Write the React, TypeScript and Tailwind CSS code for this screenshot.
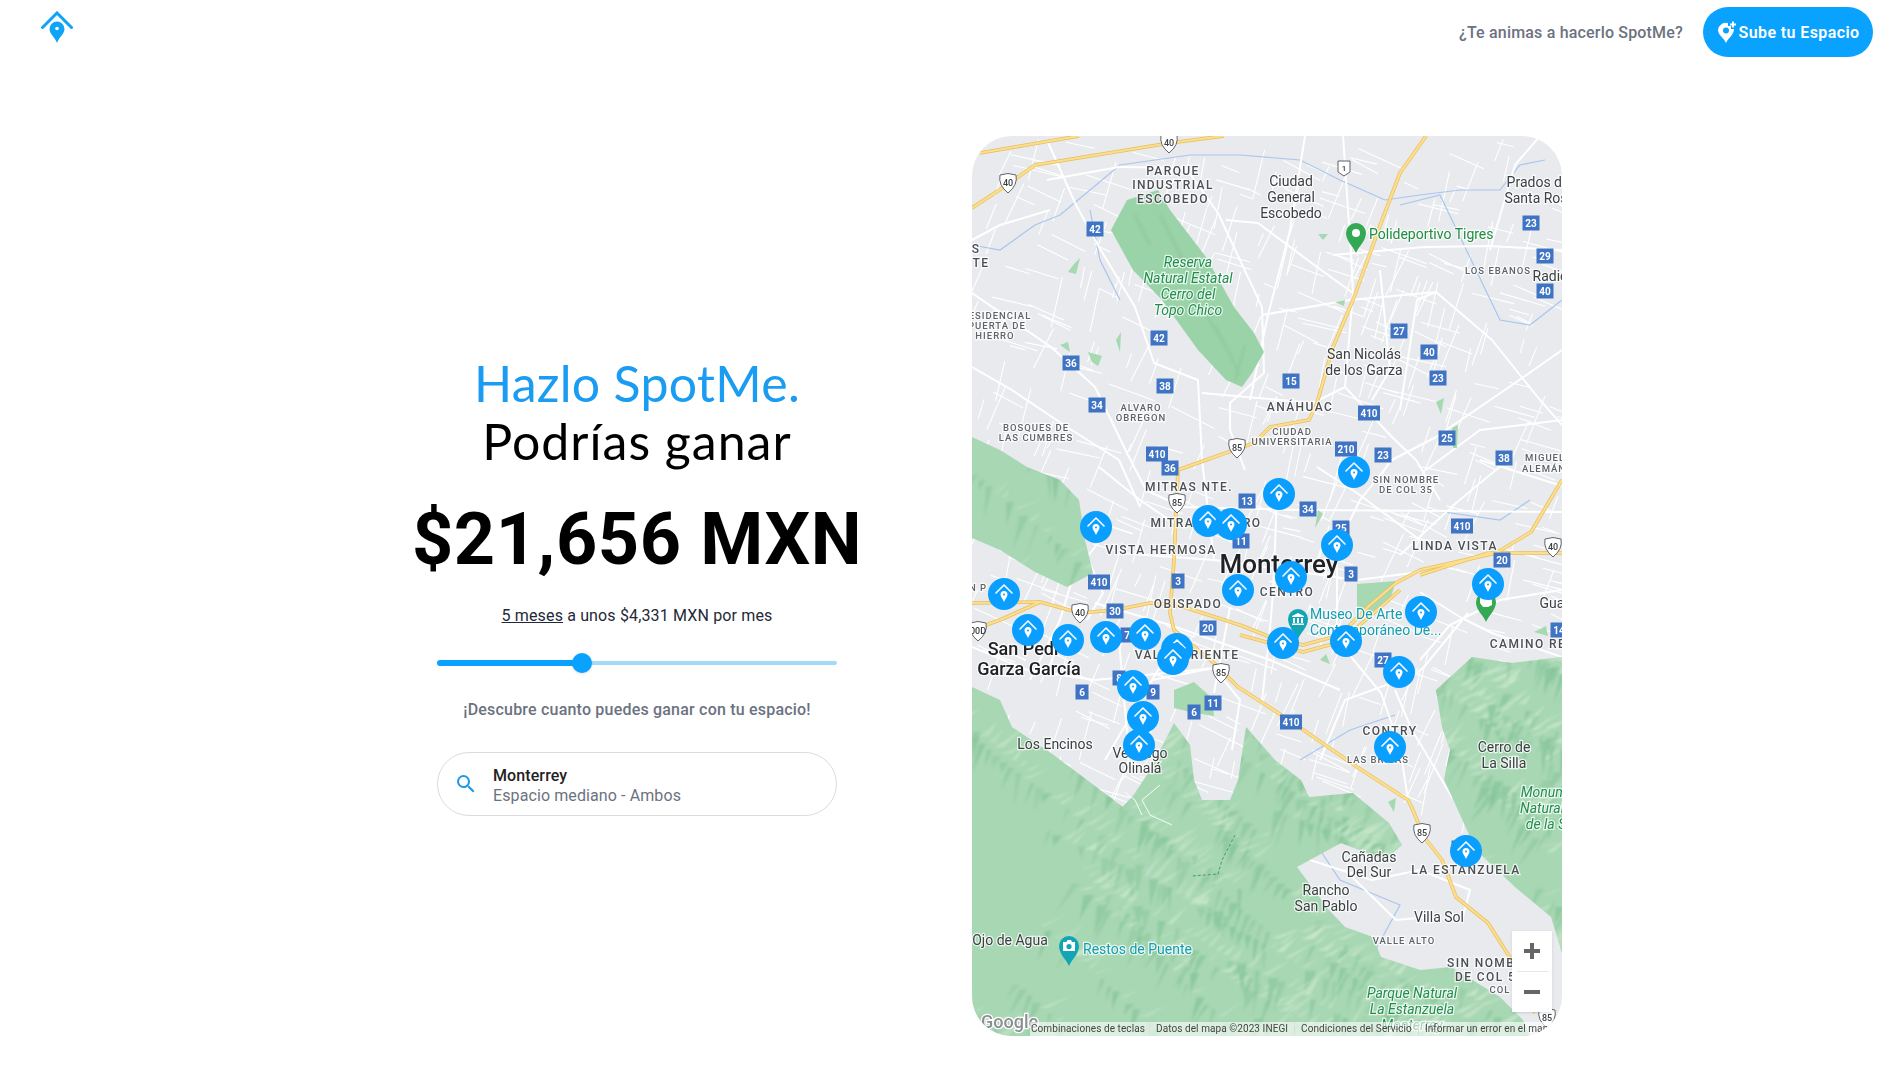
import { useMemo } from "react";

type Label = [string, number, number];

const sierraPaths = [
  "M972,437 L1000,450 L1027,467 L1060,480 L1079,500 L1085,540 L1093,573 L1067,587 L1035,572 L1000,550 L972,538 Z",
  "M972,687 L1000,700 L1012,727 L1051,753 L1087,780 L1123,807 L1135,793 L1150,770 L1174,723 L1190,745 L1194,780 L1202,800 L1230,800 L1238,780 L1246,727 L1275,760 L1301,780 L1309,797 L1353,793 L1389,823 L1402,845 L1385,860 L1341,843 L1297,867 L1329,910 L1345,927 L1373,937 L1381,957 L1420,970 L1451,967 L1500,997 L1523,1020 L1530,1036 L972,1036 Z",
  "M1562,657 L1512,663 L1472,657 L1436,690 L1442,727 L1450,750 L1444,780 L1452,797 L1476,850 L1515,887 L1551,917 L1562,953 Z",
];

const parks = [
  "M1111,230 L1127,200 L1158,190 L1170,210 L1206,257 L1234,307 L1254,333 L1264,352 L1252,373 L1242,387 L1226,380 L1198,350 L1162,300 L1133,270 Z",
  "M1357,584 L1396,581 L1390,600 L1372,612 L1357,607 Z",
  "M1174,690 L1194,682 L1212,698 L1214,716 L1190,712 L1174,708 Z",
  "M1088,352 L1102,356 L1098,366 L1092,362 Z",
  "M1116,340 L1120,352 L1121,332 Z",
  "M1452,428 L1458,425 L1457,448 L1453,448 Z",
  "M1436,402 L1444,398 L1441,414 Z",
  "M1315,528 L1318,510 L1323,514 Z",
  "M1060,345 L1068,342 L1070,352 Z",
  "M1068,272 L1074,264 L1080,258 L1076,274 Z",
  "M1335,302 L1345,300 L1344,306 Z",
  "M1318,234 L1328,234 L1323,240 Z",
  "M1388,802 L1396,798 L1394,812 Z",
  "M1534,632 L1546,626 L1548,636 Z",
  "M1320,660 L1326,654 L1330,664 Z",
];

const majorRoads = [
  "1119,167 1186,168 1218,213 1262,307 1264,373 1230,403 1230,430 1245,470",
  "1226,220 1258,223 1317,267 1353,293",
  "1262,315 1350,300 1436,292 1492,340 1540,400 1562,425",
  "1343,136 1351,253 1353,293 1345,387 1392,437 1416,460 1440,500",
  "1333,255 1424,247 1488,246 1562,250",
  "1562,350 1515,383 1436,437 1392,460 1360,500 1337,547",
  "1047,140 1075,203 1099,247 1135,307 1154,363 1198,380 1202,460 1214,560",
  "972,293 1051,347 1095,387 1127,453 1146,490 1182,507",
  "972,367 1012,390 1067,427 1119,460 1140,507",
  "1047,180 1119,167",
  "1202,393 1313,403 1345,387",
  "1182,507 1300,510 1450,511 1562,512",
  "1111,527 1087,557 1103,593 1087,620",
  "1119,553 1214,560 1357,580 1420,572",
  "1099,467 1140,500 1174,523",
  "1230,607 1214,693",
  "1277,497 1273,593 1269,640 1262,700",
  "1337,547 1337,640 1381,693 1400,747 1408,800",
  "1468,613 1424,667 1400,687",
  "1562,657 1492,633 1460,617 1420,592",
  "1317,467 1357,493 1420,540",
  "1508,460 1456,503 1400,555",
  "972,647 1027,670 1095,680 1166,673 1214,668",
  "1119,640 1127,733 1135,760",
  "1095,603 1170,625 1270,660 1340,690",
  "1400,410 1417,300 1436,292",
  "1562,590 1500,600 1450,625 1420,660",
  "1490,250 1515,165 1540,136",
  "1250,400 1268,315 1290,230 1305,136",
  "1372,400 1390,370 1380,270",
  "1426,470 1480,430 1562,420",
  "1050,210 1000,225 972,240",
  "1152,680 1214,668 1240,700 1232,750",
  "1320,760 1345,700 1400,680",
  "1452,797 1412,730 1395,690",
  "1310,860 1372,880 1420,870 1470,890 1462,920",
  "1345,870 1396,920 1440,916",
  "1090,520 1060,620 1030,680",
  "1105,760 1140,700 1170,650",
  "1480,460 1562,486",
];

const highways = [
  "972,208 1004,187 1035,165 1170,143 1224,136",
  "980,153 1079,136",
  "1426,136 1400,173 1381,223 1353,300 1333,347 1317,403 1309,420 1270,427 1254,443 1206,460 1178,470 1174,560 1170,613 1174,630 1214,663",
  "972,630 1000,620 1040,602 1080,613 1115,610 1150,603 1180,606 1240,625 1270,637 1303,645 1340,635 1370,605 1396,583 1420,570 1496,553 1531,532 1562,480",
  "972,603 1040,602",
  "1240,635 1303,652 1340,642 1375,612 1400,590",
  "1214,663 1238,687 1289,720 1357,767 1408,800 1412,808 1424,837 1442,860 1456,897 1488,923 1516,967 1535,1013",
  "1420,575 1488,553 1562,553",
];

const water = [
  "972,245 1000,250 1035,225 1060,215 1090,190 1120,165 1190,155 1240,155 1300,160 1340,180 1385,200 1420,195 1460,190 1500,190 1520,165 1545,160",
  "1090,210 1100,260 1120,300",
  "1400,205 1440,195 1500,320 1530,325 1562,300",
  "1072,1000 1030,985 972,915",
  "1072,960 1075,975 1040,985 1030,1000 1050,1030",
  "1430,510 1500,520 1530,500",
  "1300,760 1350,730 1395,715",
  "1320,850 1340,880 1400,905 1370,960",
];

const regionLabels: Label[] = [
  ["PARQUE", 1173, 175], ["INDUSTRIAL", 1173, 189], ["ESCOBEDO", 1173, 203],
  ["MITRAS NTE.", 1189, 491], ["MITRAS CENTRO", 1206, 527], ["VISTA HERMOSA", 1161, 554],
  ["LINDA VISTA", 1455, 550], ["CENTRO", 1287, 596], ["OBISPADO", 1188, 608],
  ["VALLE ORIENTE", 1187, 659], ["CONTRY", 1390, 735], ["LA ESTANZUELA", 1466, 874],
  ["ANÁHUAC", 1300, 411], ["CAMINO RE", 1528, 648], ["S", 976, 253], ["TE", 981, 267],
];

const smallRegionLabels: Label[] = [
  ["ESIDENCIAL", 1000, 319], ["PUERTA DE", 997, 329], ["HIERRO", 995, 339],
  ["LOS EBANOS", 1498, 274], ["ALVARO", 1141, 411], ["OBREGON", 1141, 421],
  ["BOSQUES DE", 1036, 431], ["LAS CUMBRES", 1036, 441], ["CIUDAD", 1292, 435],
  ["UNIVERSITARIA", 1292, 445], ["MIGUEL", 1545, 461], ["ALEMÁN", 1544, 472],
  ["SIN NOMBRE", 1406, 483], ["DE COL 35", 1406, 493], ["LAS BRISAS", 1378, 763],
  ["VALLE ALTO", 1404, 944], ["COL", 1500, 993], ["N P", 978, 591],
];

const placeLabels: Label[] = [
  ["Ciudad", 1291, 186], ["General", 1291, 202], ["Escobedo", 1291, 218],
  ["Prados de", 1538, 187], ["Santa Ros", 1536, 203], ["Radic", 1550, 281],
  ["San Nicolás", 1364, 359], ["de los Garza", 1364, 375], ["Gua", 1552, 608],
  ["Los Encinos", 1055, 749], ["Verdiego", 1140, 758], ["Olinalá", 1140, 773],
  ["Cerro de", 1504, 752], ["La Silla", 1504, 768], ["Cañadas", 1369, 862],
  ["Del Sur", 1369, 877], ["Rancho", 1326, 895], ["San Pablo", 1326, 911],
  ["Villa Sol", 1439, 922], ["Ojo de Agua", 1010, 945],
];

const parkLabels: Label[] = [
  ["Reserva", 1188, 267], ["Natural Estatal", 1188, 283], ["Cerro del", 1188, 299], ["Topo Chico", 1188, 315],
  ["Monum", 1544, 797], ["Natural", 1542, 813], ["de la S", 1546, 829],
  ["Parque Natural", 1412, 998], ["La Estanzuela", 1412, 1014], ["Monterrey", 1412, 1030],
];

const badges: Label[] = [
  ["42", 1095, 229], ["42", 1159, 338], ["36", 1071, 363], ["38", 1165, 386], ["34", 1097, 405],
  ["410", 1157, 454], ["15", 1291, 381], ["410", 1369, 413], ["210", 1346, 449], ["23", 1383, 455],
  ["25", 1447, 438], ["23", 1438, 378], ["40", 1429, 352], ["27", 1399, 331], ["40", 1545, 291],
  ["29", 1545, 256], ["23", 1531, 223], ["38", 1504, 458], ["36", 1170, 468], ["13", 1247, 501],
  ["34", 1308, 509], ["410", 1462, 526], ["25", 1341, 528], ["11", 1241, 541], ["20", 1502, 560],
  ["3", 1351, 574], ["3", 1178, 581], ["410", 1099, 582], ["30", 1115, 611], ["20", 1208, 628],
  ["14", 1559, 630], ["7", 1127, 635], ["27", 1383, 660], ["8", 1119, 678], ["9", 1153, 692],
  ["6", 1082, 692], ["11", 1213, 703], ["6", 1194, 712], ["410", 1291, 722], ["", 1458, 848],
];

const shields: Label[] = [
  ["40", 1169, 143], ["40", 1008, 183], ["85", 1237, 448], ["85", 1177, 503], ["40", 1080, 613],
  ["40", 1553, 547], ["00D", 978, 631], ["85", 1221, 673], ["85", 1422, 833], ["85", 1547, 1018],
];

const markers: [number, number][] = [
  [1354, 472], [1279, 494], [1208, 521], [1231, 524], [1096, 527], [1337, 545], [1291, 577],
  [1238, 590], [1004, 594], [1488, 584], [1421, 612], [1028, 630], [1068, 640], [1106, 637], [1145, 634],
  [1177, 649], [1173, 659], [1283, 643], [1346, 641], [1399, 672], [1133, 686], [1143, 717],
  [1139, 745], [1390, 747], [1466, 851],
];

// small seeded generator so the map comes out the same on every render
function seeded(seed: number) {
  let s = seed;
  return () => {
    s = (s + 0x6d2b79f5) | 0;
    let t = Math.imul(s ^ (s >>> 15), 1 | s);
    t = (t + Math.imul(t ^ (t >>> 7), 61 | t)) ^ t;
    return ((t ^ (t >>> 14)) >>> 0) / 4294967296;
  };
}

function Pin({ x, y, color, icon }: { x: number; y: number; color: string; icon?: "museum" | "camera" | "park" }) {
  return (
    <g transform={`translate(${x} ${y})`}>
      <path d="M0,16 C-3,9 -10,4 -10,-4 A10,10 0 1 1 10,-4 C10,4 3,9 0,16 Z" fill={color} />
      {!icon && <circle cx="0" cy="-4" r="4" fill="#fff" />}
      {icon === "museum" && <path d="M0,-10 L6,-7 V-6 H-6 V-7 Z M-5,-5 H-3 V0 H-5 Z M-1,-5 H1 V0 H-1 Z M3,-5 H5 V0 H3 Z M-6,0.5 H6 V2 H-6 Z" fill="#fff" />}
      {icon === "camera" && (
        <g>
          <path d="M-6,-8 H-2.5 L-1.5,-10 H2 L3,-8 H6 V1 H-6 Z" fill="#fff" />
          <circle cy="-3.5" r="2.6" fill={color} />
        </g>
      )}
      {icon === "park" && <path d="M-6,-9 H3 L6,-6 V-1 L2,1 H-3 L-6,-3 Z" fill="#fff" />}
    </g>
  );
}

function MapLayer() {
  const { streets, feathers } = useMemo(() => {
    const rand = seeded(17);
    const streets: string[] = [];
    for (let i = 0; i < 620; i++) {
      const x = 972 + rand() * 590;
      const y = 136 + rand() * 660;
      const a = (rand() > 0.5 ? 0.2 : 1.75) + rand() * 0.3;
      const len = 12 + rand() * 42;
      streets.push(`M${x.toFixed(1)},${y.toFixed(1)} L${(x + Math.cos(a) * len).toFixed(1)},${(y + Math.sin(a) * len).toFixed(1)}`);
    }
    // ridge lines, each with small light and dark slopes branching off it
    const feathers: { d: string; fill: string; o: number }[] = [];
    for (let r = 0; r < 90; r++) {
      let x = 930 + rand() * 620;
      let y = 430 + rand() * 600;
      const heading = 0.45 + rand() * 0.35;
      const steps = 12 + Math.floor(rand() * 22);
      for (let i = 0; i < steps; i++) {
        x += Math.cos(heading) * 9;
        y += Math.sin(heading) * 9 + (rand() - 0.5) * 3;
        const up = rand() > 0.5;
        const a = heading + (up ? -1.25 : 1.25) + (rand() - 0.5) * 0.5;
        const len = 10 + rand() * 26;
        const w = 1.5 + rand() * 4;
        const ex = x + Math.cos(a) * len;
        const ey = y + Math.sin(a) * len;
        feathers.push({
          d: `M${(x - w).toFixed(1)},${y.toFixed(1)} L${(x + w).toFixed(1)},${y.toFixed(1)} L${ex.toFixed(1)},${ey.toFixed(1)} Z`,
          fill: up ? "#cdeacf" : "#86c598",
          o: 0.35 + rand() * 0.4,
        });
      }
    }
    return { streets, feathers };
  }, []);

  return (
    <svg viewBox="972 136 590 900" className="block w-full h-full">
      <defs>
        <clipPath id="sierra">
          {sierraPaths.map((d) => (
            <path key={d} d={d} />
          ))}
        </clipPath>
        <filter id="soft">
          <feGaussianBlur stdDeviation="0.8" />
        </filter>
      </defs>

      <rect x="972" y="136" width="590" height="900" fill="#e8eaed" />
      <g stroke="#fff" strokeWidth="1.1" fill="none">
        {streets.map((d) => (
          <path key={d} d={d} />
        ))}
      </g>
      <g stroke="#a9c6ee" strokeWidth="1.2" fill="none">
        {water.map((p) => (
          <polyline key={p} points={p} />
        ))}
      </g>
      <g stroke="#fff" strokeWidth="2" fill="none" strokeLinejoin="round">
        {majorRoads.map((p) => (
          <polyline key={p} points={p} />
        ))}
      </g>

      {sierraPaths.map((d) => (
        <path key={d} d={d} fill="#a8d7b4" />
      ))}
      <g clipPath="url(#sierra)">
        <g filter="url(#soft)">
          {feathers.map((s) => (
            <path key={s.d} d={s.d} fill={s.fill} opacity={s.o} />
          ))}
        </g>
      </g>
      {parks.map((d, i) => (
        <path key={d} d={d} fill={i === 0 ? "#9bd3a9" : "#a6d8b2"} />
      ))}
      <g stroke="#8cc49a" strokeWidth="3" opacity="0.5" filter="url(#soft)">
        <path d="M1135,215 L1150,245 M1160,215 L1185,265 M1190,290 L1225,345 M1215,325 L1240,375 M1245,345 L1235,380" />
      </g>

      <g fill="none" stroke="#fff" strokeWidth="1" opacity="0.9">
        <path d="M1142,815 L1135,800 L1125,792 M1160,785 L1142,800 L1150,815 L1172,825" />
      </g>
      <path d="M1235,835 L1222,860 L1218,874 L1192,876" fill="none" stroke="#3f9f60" strokeWidth="1" strokeDasharray="3 2" />

      <g fill="none" strokeLinejoin="round">
        <g stroke="#e8bd5c" strokeWidth="3.6">
          {highways.map((p) => (
            <polyline key={p} points={p} />
          ))}
        </g>
        <g stroke="#fbdf8e" strokeWidth="2.2">
          {highways.map((p) => (
            <polyline key={p} points={p} />
          ))}
        </g>
      </g>

      <g fontFamily="Roboto, sans-serif" textAnchor="middle" stroke="#ffffff" strokeWidth="2.5" paintOrder="stroke" strokeOpacity="0.75">
        <g fontSize="12" fontWeight="500" letterSpacing="1.4" fill="#4b4f54">
          {regionLabels.map(([t, x, y]) => (
            <text key={t + x} x={x} y={y}>{t}</text>
          ))}
        </g>
        <g fontSize="9.5" fontWeight="500" letterSpacing="1" fill="#5f6368">
          {smallRegionLabels.map(([t, x, y]) => (
            <text key={t + x} x={x} y={y}>{t}</text>
          ))}
        </g>
        <g fontSize="14" fill="#3c4043">
          {placeLabels.map(([t, x, y]) => (
            <text key={t + y} x={x} y={y}>{t}</text>
          ))}
        </g>
        <g fontSize="14" fontStyle="italic" fill="#1f8f4e">
          {parkLabels.map(([t, x, y]) => (
            <text key={t + y} x={x} y={y}>{t}</text>
          ))}
        </g>
        <text x="1279" y="573" fontSize="26" fontWeight="500" fill="#202124">Monterrey</text>
        <text x="1029" y="655" fontSize="18" fontWeight="500" fill="#202124">San Pedro</text>
        <text x="1029" y="675" fontSize="18" fontWeight="500" fill="#202124">Garza García</text>
        <g fontSize="14" textAnchor="start">
          <text x="1369" y="239" fill="#1e8e3e">Polideportivo Tigres</text>
          <text x="1310" y="619" fill="#129eaf">Museo De Arte</text>
          <text x="1310" y="635" fill="#129eaf">Contemporáneo De...</text>
          <text x="1083" y="954" fill="#129eaf">Restos de Puente</text>
          <text x="1447" y="967" fontSize="12" fontWeight="500" letterSpacing="1.4" fill="#4b4f54">SIN NOMB</text>
          <text x="1455" y="981" fontSize="12" fontWeight="500" letterSpacing="1.4" fill="#4b4f54">DE COL 5</text>
        </g>
      </g>

      <g fontFamily="Roboto, sans-serif" textAnchor="middle">
        {badges.map(([t, x, y]) => {
          const w = t.length > 2 ? 22 : t.length === 2 ? 17 : 13;
          return (
            <g key={`${t}-${x}`}>
              <rect x={x - w / 2} y={y - 7.5} width={w} height="15" fill="#3f74c4" />
              <text x={x} y={y + 3.5} fontSize="10" fontWeight="700" fill="#fff">{t}</text>
            </g>
          );
        })}
        {shields.map(([t, x, y]) => (
          <g key={`${t}-${x}`} transform={`translate(${x} ${y})`}>
            <path d="M-8,-8 Q0,-11 8,-8 Q10,2 0,10 Q-10,2 -8,-8 Z" fill="#fff" stroke="#5f6368" strokeWidth="1" />
            <text y="3" fontSize="9" fontWeight="500" fill="#3c4043">{t}</text>
          </g>
        ))}
        <g transform="translate(1344 168)">
          <path d="M-6,-7 H6 V4 L0,8 L-6,4 Z" fill="#fff" stroke="#5f6368" strokeWidth="1" />
          <text y="3" fontSize="8" fontWeight="500" fill="#3c4043">1</text>
        </g>
      </g>

      <Pin x={1356} y={237} color="#34a853" />
      <Pin x={1298} y={623} color="#12a5b5" icon="museum" />
      <Pin x={1069} y={950} color="#12a5b5" icon="camera" />
      <Pin x={1486} y={606} color="#34a853" icon="park" />

      {markers.map(([x, y]) => (
        <g key={`${x}-${y}`} transform={`translate(${x} ${y})`}>
          <circle r="16" fill="#0a9fff" />
          <path d="M-8,-1 L0,-9 L8,-1" fill="none" stroke="#fff" strokeWidth="1.6" strokeLinecap="round" strokeLinejoin="round" />
          <path d="M0,8 C-1,5 -3.5,3 -3.5,0.5 A3.5,3.5 0 1 1 3.5,0.5 C3.5,3 1,5 0,8 Z" fill="#fff" />
          <circle cy="0.5" r="1" fill="#0a9fff" />
        </g>
      ))}

      <text x="981" y="1028" fontFamily="Roboto, sans-serif" fontSize="18" fontWeight="500" fill="#8b8f93" stroke="#fff" strokeWidth="2.5" paintOrder="stroke">Google</text>
    </svg>
  );
}

export default function App() {
  return (
    <div className="h-[1079px] overflow-hidden bg-white [font-family:Roboto,sans-serif]">
      <header className="h-[66px] flex items-start justify-between pl-[41px] pr-[30px]">
        <svg width="32" height="34" viewBox="0 0 32 34" className="mt-[11px]">
          <path d="M1.5,16.5 L16,2 L30.5,16.5" fill="none" stroke="#0ea5f9" strokeWidth="3" strokeLinecap="round" />
          <path d="M16,32 C14,26 8.5,23 8.5,18 A7.5,7.5 0 1 1 23.5,18 C23.5,23 18,26 16,32 Z" fill="#0ea5f9" />
          <circle cx="16" cy="17.5" r="1.8" fill="#fff" />
        </svg>
        <div className="flex items-center gap-5 mt-[7px]">
          <span className="text-base font-medium tracking-[0.18px] text-[#6b7280] mt-[2px]">¿Te animas a hacerlo SpotMe?</span>
          <button className="h-[50px] w-[170px] pt-[2px] rounded-full bg-[#0aa2ff] text-white font-semibold text-base tracking-[0.4px] flex items-center justify-center gap-[2px]">
            <svg width="20" height="23" viewBox="0 0 20 23" className="-mt-[2px]">
              <path d="M9,22 C7,17 1,14 1,9 A8,8 0 0 1 11,2 L11,5 L14,5 L14,8 L17,8 C17,14 11,17 9,22 Z" fill="#fff" />
              <circle cx="9" cy="9.5" r="3" fill="#0aa2ff" />
              <path d="M16,0.5 V6.5 M13,3.5 H19" stroke="#fff" strokeWidth="1.8" />
            </svg>
            Sube tu Espacio
          </button>
        </div>
      </header>

      <main className="flex items-center pl-[337px] pt-[70px]">
        <section className="w-[600px] flex flex-col items-center text-center pb-[2px]">
          <h1 className="[font-family:Lato,sans-serif] text-[50px] leading-[58px] text-black">
            <span className="block text-[#1a9cf2] tracking-[0.3px]">Hazlo SpotMe.</span>
            <span className="block tracking-[1px]">Podrías ganar</span>
          </h1>
          <p className="mt-[25px] text-[72px] leading-[90px] font-bold tracking-[0.6px] text-black">$21,656 MXN</p>
          <p className="mt-[19px] text-base leading-6 tracking-[0.15px] text-[#1f2937]">
            <span className="underline">5 meses</span> a unos $4,331 MXN por mes
          </p>
          <div className="mt-[25px] w-[400px] h-5 relative flex items-center">
            <div className="h-[6px] w-[145px] rounded-l-full bg-[#0aa2ff]" />
            <div className="h-1 flex-1 rounded-r-full bg-[#a3d9fb]" />
            <div className="absolute left-[135px] w-5 h-5 rounded-full bg-[#0aa2ff] shadow-sm" />
          </div>
          <p className="mt-[25px] text-base leading-6 font-medium tracking-[0.2px] text-[#6b7280]">¡Descubre cuanto puedes ganar con tu espacio!</p>
          <div className="mt-[30px] w-[400px] h-16 rounded-full border border-[#dcdcdc] flex items-center pl-[16px] text-left">
            <svg width="24" height="24" viewBox="0 0 24 24" className="text-[#1e9be6]">
              <path fill="currentColor" d="M15.5 14h-.79l-.28-.27A6.471 6.471 0 0 0 16 9.5 6.5 6.5 0 1 0 9.5 16c1.61 0 3.09-.59 4.23-1.57l.27.28v.79l5 4.99L20.49 19l-4.99-5zm-6 0C7.01 14 5 11.99 5 9.5S7.01 5 9.5 5 14 7.01 14 9.5 11.99 14 9.5 14z" />
            </svg>
            <div className="ml-[15px] pt-[4px] tracking-[0.1px]">
              <p className="text-base leading-5 font-medium text-[#222]">Monterrey</p>
              <p className="text-base leading-5 text-[#6b7280]">Espacio mediano - Ambos</p>
            </div>
          </div>
        </section>

        <section className="ml-[35px] relative w-[590px] h-[900px] rounded-[40px] overflow-hidden">
          <MapLayer />
          <div className="absolute right-[10px] top-[795px] w-10 h-[81px] bg-white shadow-sm flex flex-col items-center text-[#666]">
            <svg width="40" height="40" viewBox="0 0 40 40">
              <path d="M20,12 V28 M12,20 H28" stroke="currentColor" strokeWidth="4" />
            </svg>
            <div className="w-[31px] h-px bg-[#e6e6e6]" />
            <svg width="40" height="40" viewBox="0 0 40 40">
              <path d="M12,20 H28" stroke="currentColor" strokeWidth="4" />
            </svg>
          </div>
          <div className="absolute left-[58px] right-0 bottom-0 h-[14px] bg-white/60 flex items-center overflow-hidden whitespace-nowrap text-[10px] leading-[14px] tracking-[0.08px] text-[#444]">
            <span className="px-[1px] w-[119px] shrink-0">Combinaciones de teclas</span>
            <span className="px-[6px] border-l border-[#ddd] shrink-0">Datos del mapa ©2023 INEGI</span>
            <span className="px-[6px] border-l border-[#ddd] shrink-0">Condiciones del Servicio</span>
            <span className="px-[6px] border-l border-[#ddd] shrink-0">Informar un error en el mapa</span>
          </div>
        </section>
      </main>
    </div>
  );
}
